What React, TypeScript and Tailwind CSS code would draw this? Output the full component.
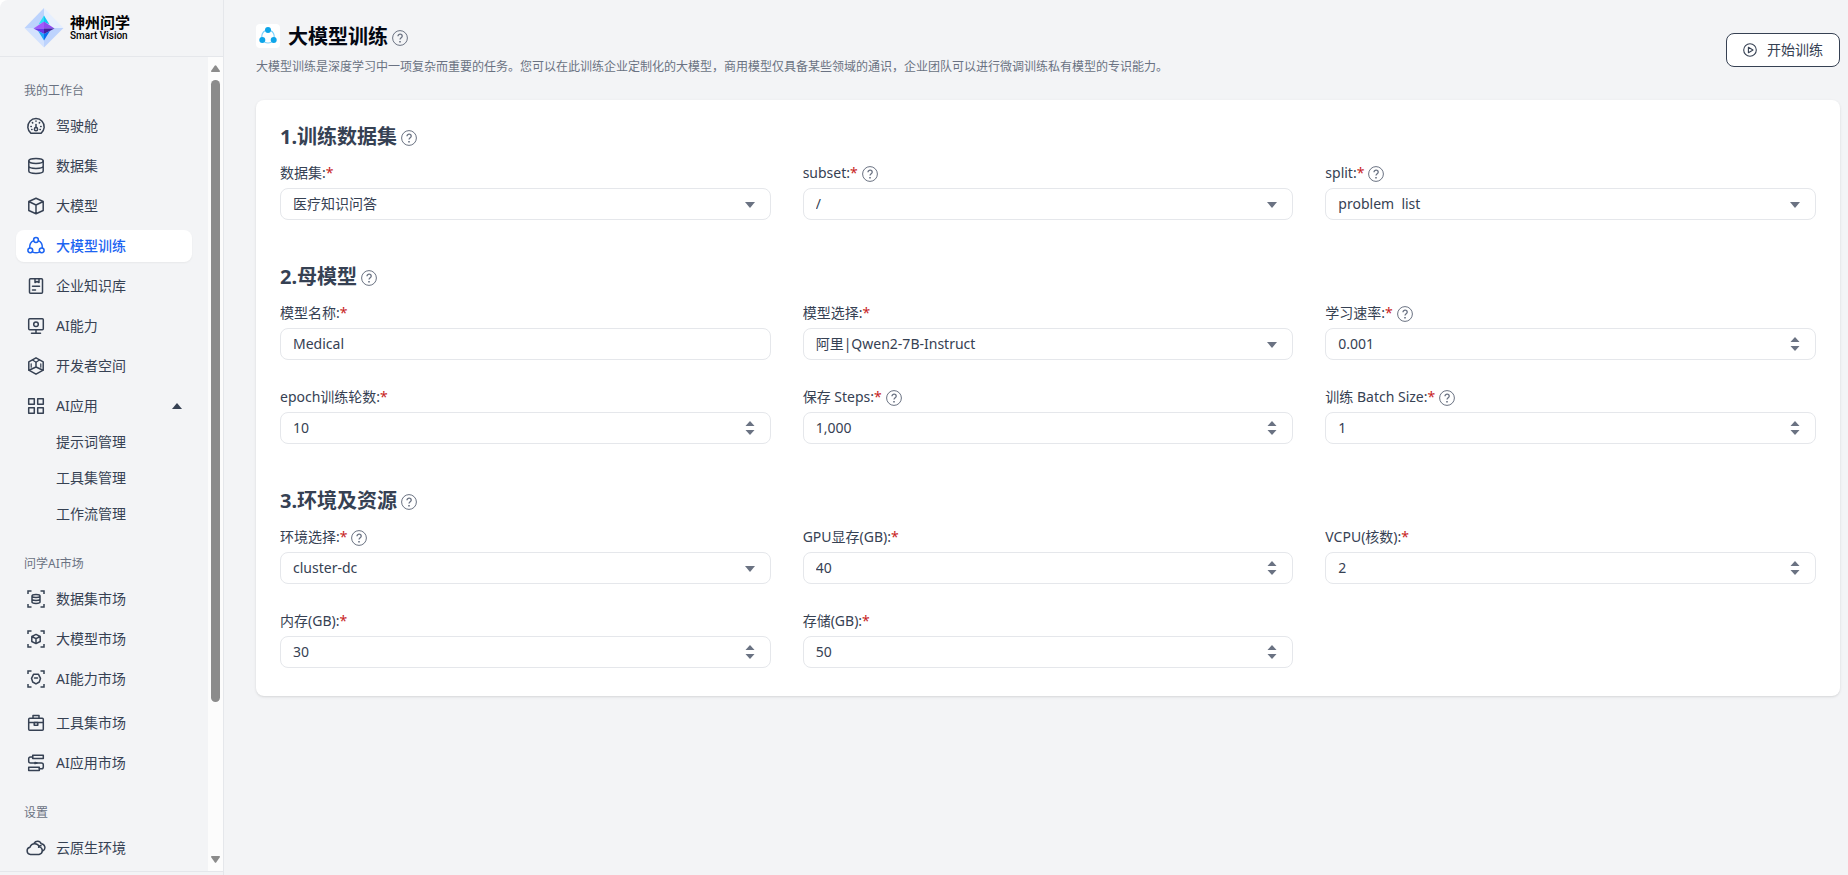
import type { ReactNode } from "react";

type IconProps = { children: ReactNode };

type NavItem = {
  label: string;
  icon: ReactNode;
  active?: boolean;
  open?: boolean;
  children?: string[];
};

type FieldProps = {
  id: string;
  label: string;
  value: string;
  type: "text" | "select" | "number";
  help?: boolean;
};

type Section = {
  title: string;
  fields: FieldProps[];
};

const Icon = ({ children }: IconProps) => (
  <svg
    viewBox="0 0 20 20"
    className="size-5 shrink-0"
    fill="none"
    stroke="currentColor"
    strokeWidth="1.5"
    strokeLinecap="round"
    strokeLinejoin="round"
    aria-hidden="true"
  >
    {children}
  </svg>
);

/* Corner brackets shared by the market icons */
const Frame = ({ children }: IconProps) => (
  <Icon>
    <path d="M2 5V2h3.5M14.5 2H18v3M18 15v3h-3.5M5.5 18H2v-3" strokeLinecap="butt" strokeLinejoin="miter" />
    {children}
  </Icon>
);

const GaugeIcon = () => (
  <Icon>
    <path d="M5 17.3a8.2 8.2 0 1 1 10 0Z" />
    <path d="M10 8.5v2.8" />
    <circle cx="10" cy="13.2" r="1.6" />
    <path d="M10 4.9v.4M6.4 6.6l.3.3M13.6 6.6l-.3.3M4.9 10.4h.4M14.7 10.4h.4M5.7 13.6h.3M14 13.6h.3" />
  </Icon>
);

const DatabaseIcon = () => (
  <Icon>
    <path d="M2.8 5c0-1.6 2.4-2.4 7.2-2.4s7.2.8 7.2 2.4-2.4 2.4-7.2 2.4S2.8 6.6 2.8 5Z" />
    <path d="M2.8 5v10c0 1.6 2.4 2.4 7.2 2.4s7.2-.8 7.2-2.4V5M2.8 10c0 1.6 2.4 2.4 7.2 2.4s7.2-.8 7.2-2.4" />
  </Icon>
);

const CubeIcon = () => (
  <Icon>
    <path d="M10 2.300l7.200 3.200v9L10 17.700l-7.200-3.200v-9ZM2.800 5.500 10 9l7.200-3.500M10 9v8.500" />
  </Icon>
);

const TrainIcon = () => (
  <Icon>
    <circle cx="10" cy="4" r="2.4" />
    <circle cx="4.3" cy="14.3" r="2.4" />
    <circle cx="15.7" cy="14.3" r="2.4" />
    <path d="M7.6 4.6C5 5.8 3.5 8.4 3.7 11.8M12.4 4.6c2.6 1.2 4.1 3.8 3.9 7.2M6.3 15.8c2.3 1.2 5.1 1.2 7.4 0" />
  </Icon>
);

const BookIcon = () => (
  <Icon>
    <rect x="3.5" y="2.7" width="13" height="14.6" rx="1" />
    <path d="M9 2.8v3.7l2-1 2 1V2.8M6.5 10.3h7M6.5 14h3" />
  </Icon>
);

const MonitorIcon = () => (
  <Icon>
    <rect x="2.7" y="2.7" width="14.6" height="11" rx="1" />
    <circle cx="10" cy="8.2" r="2.3" />
    <path d="M10 13.7v3.3M5.5 17.2h9" />
  </Icon>
);

const DevSpaceIcon = () => (
  <Icon>
    <path d="M10 1.8l7.2 4.1v8.2L10 18.2l-7.2-4.100V5.900Z" />
    <path d="M10 11 3 14.200M10 11l7 3.200M10 11V6.500" />
    <path d="M6.600 4 10 6.200 13.400 4M5.200 7.800v3.400M14.800 7.800v3.400" strokeWidth="1.2" />
  </Icon>
);

const AppsIcon = () => (
  <Icon>
    <rect x="2.7" y="2.7" width="5.6" height="5.6" />
    <rect x="11.7" y="2.7" width="5.6" height="5.6" />
    <rect x="2.7" y="11.7" width="5.6" height="5.6" />
    <rect x="11.7" y="11.7" width="5.6" height="5.6" />
  </Icon>
);

const DataMarketIcon = () => (
  <Frame>
    <path d="M6 7c0-.9 1.3-1.400 4-1.400s4 .5 4 1.400-1.300 1.400-4 1.400S6 7.900 6 7ZM6 7v6c0 .9 1.300 1.400 4 1.400s4-.5 4-1.400V7M6 10c0 .9 1.300 1.400 4 1.400s4-.5 4-1.400" />
  </Frame>
);

const ModelMarketIcon = () => (
  <Frame>
    <path d="M10 5.400l4.200 2.100v5L10 14.600l-4.200-2.100v-5ZM5.800 7.500 10 9.700l4.200-2.200M10 9.700v4.700" />
  </Frame>
);

const AbilityMarketIcon = () => (
  <Frame>
    <path d="M7.5 5.3h5l2 4-1.200 3.700L10 14.900 6.700 13 5.500 9.300ZM8.500 9.100h3" />
  </Frame>
);

const ToolboxIcon = () => (
  <Icon>
    <rect x="2.7" y="5.2" width="14.6" height="12" rx="1" />
    <path d="M7 5V2.600h6V5M2.700 9.400h14.600" />
    <rect x="8.2" y="9.4" width="3.6" height="2.9" />
  </Icon>
);

const FlowIcon = () => (
  <Icon>
    <rect x="6.7" y="2.3" width="10.6" height="3.3" />
    <rect x="2.7" y="14.2" width="10.6" height="3.3" />
    <path d="M6.700 4H4.500Q2.700 4 2.700 5.800v2.400Q2.700 10 4.500 10h11q1.800 0 1.800 1.800V14q0 1.800-1.800 1.800h-2.200" />
    <path d="M9 9.500l2 .5-2 .5Z" />
  </Icon>
);

const CloudIcon = () => (
  <Icon>
    <path d="M4.500 16.500a3.700 3.700 0 0 1-.5-7.300 5 5 0 0 1 9.400-.3 3.900 3.900 0 0 1-.3 7.600Z" />
    <path d="M8.200 5.200c1.500-2.800 6-2.600 6.900.6 3.900.3 5.300 5 1.700 7.100" />
    <path d="M12.600 9.300c.2-1 1.400-1.700 2.400-1.500" />
  </Icon>
);

const PlayIcon = () => (
  <svg viewBox="0 0 14 14" className="size-3.5" fill="none" stroke="currentColor" strokeWidth="1.1" strokeLinejoin="round" aria-hidden="true">
    <circle cx="7" cy="7" r="6.3" />
    <path d="M5.400 4.300v5.400L10 7Z" />
  </svg>
);

const HelpIcon = () => (
  <svg viewBox="0 0 16 16" className="size-4 shrink-0 text-gray-500" fill="none" stroke="currentColor" role="img" aria-label="帮助">
    <circle cx="8" cy="8" r="7.4" />
    <path d="M6 6.200c0-2.700 4.200-2.600 4.200 0C10.200 7.700 8 7.900 8 9.600" strokeWidth="1.3" />
    <path d="M7.200 11.800h1.600" strokeWidth="1.6" />
  </svg>
);

const Logo = () => (
  <svg viewBox="0 0 40 40" className="size-10" aria-hidden="true">
    <path d="M20 0 .5 20H20Z" fill="#bcd3fd" />
    <path d="M20 0l19.500 20H20Z" fill="#e6effe" />
    <path d="M.5 20 20 39.500V20Z" fill="#d3e2fe" />
    <path d="M39.500 20 20 39.500V20Z" fill="#bdd3fd" />
    <path d="M20 7.500 14.500 16.500 20 14Z" fill="#2be0f5" />
    <path d="M20 7.500l5.500 9L20 14Z" fill="#12c3f4" />
    <path d="M9.500 20.500 20 13.500v7Z" fill="#a259fb" />
    <path d="M30.500 20.500 20 13.500v7Z" fill="#8f4df0" />
    <path d="M9.500 20.500H20V26Z" fill="#6a35e8" />
    <path d="M30.500 20.500H20V26Z" fill="#42219f" />
    <path d="M14 22.800 20 32.500V26Z" fill="#22a7f7" />
    <path d="M26 22.800 20 32.500V26Z" fill="#0a6ef0" />
  </svg>
);

const workspace: NavItem[] = [
  { label: "驾驶舱", icon: <GaugeIcon /> },
  { label: "数据集", icon: <DatabaseIcon /> },
  { label: "大模型", icon: <CubeIcon /> },
  { label: "大模型训练", icon: <TrainIcon />, active: true },
  { label: "企业知识库", icon: <BookIcon /> },
  { label: "AI能力", icon: <MonitorIcon /> },
  { label: "开发者空间", icon: <DevSpaceIcon /> },
  {
    label: "AI应用",
    icon: <AppsIcon />,
    open: true,
    children: ["提示词管理", "工具集管理", "工作流管理"],
  },
];

const market: NavItem[] = [
  { label: "数据集市场", icon: <DataMarketIcon /> },
  { label: "大模型市场", icon: <ModelMarketIcon /> },
  { label: "AI能力市场", icon: <AbilityMarketIcon /> },
];

const marketApps: NavItem[] = [
  { label: "工具集市场", icon: <ToolboxIcon /> },
  { label: "AI应用市场", icon: <FlowIcon /> },
];

const settings: NavItem[] = [{ label: "云原生环境", icon: <CloudIcon /> }];

const sections: Section[] = [
  {
    title: "1.训练数据集",
    fields: [
      { id: "dataset", label: "数据集:", value: "医疗知识问答", type: "select" },
      { id: "subset", label: "subset:", value: "/", type: "select", help: true },
      { id: "split", label: "split:", value: "problem\u00a0\u00a0list", type: "select", help: true },
    ],
  },
  {
    title: "2.母模型",
    fields: [
      { id: "name", label: "模型名称:", value: "Medical", type: "text" },
      { id: "model", label: "模型选择:", value: "阿里|Qwen2-7B-Instruct", type: "select" },
      { id: "rate", label: "学习速率:", value: "0.001", type: "number", help: true },
      { id: "epoch", label: "epoch训练轮数:", value: "10", type: "number" },
      { id: "steps", label: "保存 Steps:", value: "1,000", type: "number", help: true },
      { id: "batch", label: "训练 Batch Size:", value: "1", type: "number", help: true },
    ],
  },
  {
    title: "3.环境及资源",
    fields: [
      { id: "env", label: "环境选择:", value: "cluster-dc", type: "select", help: true },
      { id: "gpu", label: "GPU显存(GB):", value: "40", type: "number" },
      { id: "vcpu", label: "VCPU(核数):", value: "2", type: "number" },
      { id: "memory", label: "内存(GB):", value: "30", type: "number" },
      { id: "storage", label: "存储(GB):", value: "50", type: "number" },
    ],
  },
];

const NavGroup = ({ items }: { items: NavItem[] }) => (
  <ul className="space-y-2">
    {items.map((item) => (
      <li key={item.label}>
        <a
          href="#"
          className={
            item.active
              ? "flex h-8 items-center gap-2.5 rounded-lg bg-white px-2.5 font-medium text-[#1c64f2] shadow-xs"
              : "flex h-8 items-center gap-2.5 rounded-lg px-2.5 text-gray-700"
          }
        >
          {item.icon}
          <span className="flex-1">{item.label}</span>
          {item.open && (
            <svg viewBox="0 0 10 6" className="h-1.5 w-2.5" fill="currentColor" aria-hidden="true">
              <path d="M5 0l5 6H0Z" />
            </svg>
          )}
        </a>
        {item.children && (
          <ul className="mt-1 space-y-1">
            {item.children.map((child) => (
              <li key={child}>
                <a href="#" className="flex h-8 items-center pl-10">
                  {child}
                </a>
              </li>
            ))}
          </ul>
        )}
      </li>
    ))}
  </ul>
);

const NavTitle = ({ children }: { children: string }) => (
  <h2 className="mt-[26px] mb-[11px] px-2 text-xs text-gray-500">{children}</h2>
);

const Sidebar = () => (
  <aside className="flex w-56 shrink-0 flex-col border-r border-gray-200 text-sm text-gray-700">
    <div className="flex h-[57px] shrink-0 items-center gap-1.5 border-b border-gray-200 pl-6 text-black">
      <Logo />
      <div>
        <div className="text-[15px] leading-4 font-bold">神州问学</div>
        <div className="font-['Roboto',sans-serif] text-[10px] leading-3 font-medium">Smart Vision</div>
      </div>
    </div>

    <div className="flex min-h-0 flex-1">
      <nav className="flex-1 overflow-hidden px-4">
        <NavTitle>我的工作台</NavTitle>
        <NavGroup items={workspace} />
        <NavTitle>问学AI市场</NavTitle>
        <div className="space-y-3">
          <NavGroup items={market} />
          <NavGroup items={marketApps} />
        </div>
        <NavTitle>设置</NavTitle>
        <NavGroup items={settings} />
      </nav>

      {/* Scrollbar */}
      <div className="flex w-[15px] flex-col items-center bg-[#fcfcfc] py-2 text-[#8b8b8b]">
        <svg viewBox="0 0 9 7" className="mb-2 h-[7px] w-[9px]" fill="currentColor" aria-hidden="true">
          <path d="M3.700.8q.8-1 1.600 0L9 6q.2 1-.8 1H.8Q-.2 7 0 6Z" />
        </svg>
        <div className="h-[78%] w-[9px] rounded-full bg-[#8b8b8b]" />
        <svg viewBox="0 0 9 7" className="mt-auto h-[7px] w-[9px]" fill="currentColor" aria-hidden="true">
          <path d="M3.700 6.200q.8 1 1.600 0L9 1q.2-1-.8-1H.8Q-.2 0 0 1Z" />
        </svg>
      </div>
    </div>
    <div className="h-1 shrink-0 border-t border-gray-200" />
  </aside>
);

const Field = ({ id, label, value, type, help }: FieldProps) => (
  <div className="mb-7">
    <div className="mb-1 flex h-5 items-center gap-1">
      <label htmlFor={id} className="pb-0.5 text-sm leading-5">
        {label}
        <span className="text-[#c81e1e]">*</span>
      </label>
      {help && <HelpIcon />}
    </div>

    <div className="relative">
      {type === "select" ? (
        <select
          id={id}
          defaultValue={value}
          className="h-8 w-full appearance-none rounded-lg border border-gray-200 bg-white px-3 text-sm outline-none"
        >
          <option value={value}>{value}</option>
        </select>
      ) : (
        <input
          id={id}
          type="text"
          inputMode={type === "number" ? "decimal" : "text"}
          defaultValue={value}
          className="h-8 w-full rounded-lg border border-gray-200 bg-white px-3 pb-0.5 text-sm outline-none"
        />
      )}

      {type === "select" && (
        <svg viewBox="0 0 10 6" className="pointer-events-none absolute top-3.5 right-4 h-1.5 w-2.5 text-gray-500" fill="currentColor" aria-hidden="true">
          <path d="M0 0h10L5 6Z" />
        </svg>
      )}

      {type === "number" && (
        <div className="absolute inset-y-0 right-4 flex flex-col justify-center gap-1 text-gray-500">
          <button type="button" aria-label="增加">
            <svg viewBox="0 0 10 5" className="h-[5px] w-2.5" fill="currentColor">
              <path d="M5 0l4.500 5h-9Z" />
            </svg>
          </button>
          <button type="button" aria-label="减少">
            <svg viewBox="0 0 10 5" className="h-[5px] w-2.5" fill="currentColor">
              <path d="M5 5 .5 0h9Z" />
            </svg>
          </button>
        </div>
      )}
    </div>
  </div>
);

const App = () => {
  return (
    <div className="bg-white font-['Noto_Sans','Noto_Sans_CJK_SC',sans-serif]">
      <div className="flex h-screen rounded-tl-lg bg-gray-100 text-gray-700">
        <Sidebar />

        <main className="min-w-0 flex-1 overflow-auto pt-6 pr-2 pl-8">
          {/* Header */}
          <header className="flex h-[76px] items-start justify-between">
            <div>
              <div className="flex gap-2">
                <span className="flex size-6 items-center justify-center rounded bg-white">
                  <svg viewBox="0 0 20 20" className="size-5" aria-hidden="true">
                    <path d="M7.500 4.500C4.500 6 3.500 9 3.800 12M12.500 4.500c3 1.500 4 4.500 3.700 7.500M6.500 16.300c2.300.9 4.700.9 7 0" fill="none" stroke="#7dd3fc" strokeWidth="1.2" />
                    <circle cx="10" cy="4" r="3" fill="#0ea5e9" />
                    <circle cx="4.3" cy="14" r="3" fill="#0ea5e9" />
                    <circle cx="15.7" cy="14" r="3" fill="#0ea5e9" />
                  </svg>
                </span>
                <div className="flex items-center gap-1">
                  <h1 className="pb-0.5 text-xl leading-[26px] font-bold text-gray-950">大模型训练</h1>
                  <HelpIcon />
                </div>
              </div>
              <p className="mt-[7px] text-xs text-gray-500">
                大模型训练是深度学习中一项复杂而重要的任务。您可以在此训练企业定制化的大模型，商用模型仅具备某些领域的通识，企业团队可以进行微调训练私有模型的专识能力。
              </p>
            </div>
            <button
              type="button"
              className="mt-[9px] flex h-[34px] items-center gap-2.5 rounded-lg border border-gray-700 bg-white px-4 text-sm"
            >
              <PlayIcon />
              开始训练
            </button>
          </header>

          {/* Form */}
          <form className="rounded-lg bg-white px-6 pt-6 shadow-sm">
            {sections.map((section) => (
              <section key={section.title} className="not-first:pt-4">
                <div className="mb-3 flex items-center gap-1">
                  <h2 className="pb-0.5 text-xl leading-[26px] font-bold">{section.title}</h2>
                  <HelpIcon />
                </div>
                <div className="grid grid-cols-3 gap-x-8">
                  {section.fields.map((field) => (
                    <Field key={field.id} {...field} />
                  ))}
                </div>
              </section>
            ))}
          </form>
        </main>
      </div>
    </div>
  );
};

export default App;
